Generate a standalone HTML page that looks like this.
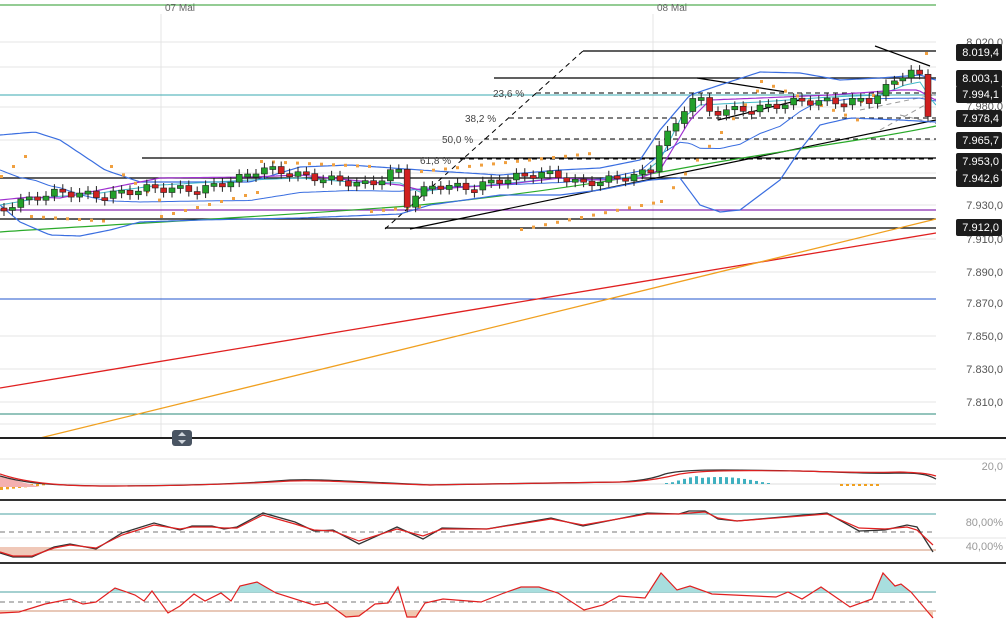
<!DOCTYPE html>
<html><head><meta charset="utf-8"><style>
html,body{margin:0;padding:0;background:#fff;width:1006px;height:626px;overflow:hidden;font-family:"Liberation Sans",sans-serif}
svg{display:block}
text{font-family:"Liberation Sans",sans-serif}
</style></head><body>
<svg id="s" width="1006" height="626" viewBox="0 0 1006 626">
<defs>
<clipPath id="ca"><rect x="0" y="560" width="936" height="32"/></clipPath>
<clipPath id="cb"><rect x="0" y="611" width="936" height="20"/></clipPath>
</defs>
<rect width="1006" height="626" fill="#fff"/>
<g stroke="#e4e4e4" stroke-width="1">
<line x1="0" y1="42" x2="936" y2="42"/><line x1="0" y1="67" x2="936" y2="67"/>
<line x1="0" y1="107" x2="936" y2="107"/><line x1="0" y1="140" x2="936" y2="140"/>
<line x1="0" y1="173" x2="936" y2="173"/><line x1="0" y1="205" x2="936" y2="205"/>
<line x1="0" y1="239" x2="936" y2="239"/><line x1="0" y1="272" x2="936" y2="272"/>
<line x1="0" y1="336" x2="936" y2="336"/><line x1="0" y1="369" x2="936" y2="369"/>
<line x1="0" y1="402" x2="936" y2="402"/><line x1="0" y1="424" x2="936" y2="424"/>
<line x1="161" y1="14" x2="161" y2="438"/><line x1="653" y1="14" x2="653" y2="438"/>
<line x1="0" y1="459" x2="1006" y2="459"/><line x1="0" y1="538" x2="1006" y2="538"/>
</g>
<line x1="0" y1="5" x2="936" y2="5" stroke="#2a9a2a"/>
<text x="165" y="11" font-size="10" fill="#666">07 Mai</text>
<text x="657" y="11" font-size="10" fill="#666">08 Mai</text>
<line x1="0" y1="95" x2="936" y2="95" stroke="#3aa8b0"/>
<line x1="0" y1="299" x2="936" y2="299" stroke="#2255cc"/>
<line x1="0" y1="414" x2="936" y2="414" stroke="#2a8a7a"/>
<line x1="0" y1="210" x2="936" y2="210" stroke="#8a2ab0" stroke-width="1.3"/>
<g stroke="#000" stroke-width="1.2">
<line x1="583" y1="51" x2="956" y2="51"/><line x1="494" y1="78" x2="956" y2="78"/>
<line x1="142" y1="158" x2="956" y2="158"/><line x1="0" y1="178" x2="956" y2="178"/>
<line x1="0" y1="219" x2="956" y2="219"/><line x1="385" y1="228" x2="956" y2="228"/>
<line x1="410" y1="229" x2="936" y2="120"/>
<line x1="875" y1="46" x2="930" y2="66"/><line x1="697" y1="78" x2="786" y2="92"/>
<line x1="718" y1="120" x2="800" y2="100"/>
</g>
<g stroke="#000" stroke-dasharray="5,4" stroke-width="1">
<line x1="385" y1="229" x2="583" y2="51"/>
<line x1="536" y1="93" x2="956" y2="93"/><line x1="509" y1="118" x2="956" y2="118"/>
<line x1="484" y1="139" x2="956" y2="139"/><line x1="460" y1="159" x2="956" y2="159"/>
</g>
<g stroke="#999" stroke-dasharray="5,4"><line x1="880" y1="130" x2="1006" y2="60"/><line x1="860" y1="110" x2="1006" y2="80"/><line x1="900" y1="115" x2="1006" y2="140"/></g>
<g font-size="10" fill="#444">
<text x="493" y="97">23,6 %</text><text x="465" y="122">38,2 %</text>
<text x="442" y="143">50,0 %</text><text x="420" y="164">61,8 %</text>
</g>
<line x1="0" y1="388" x2="936" y2="233" stroke="#e02020" stroke-width="1.3"/>
<line x1="40" y1="438" x2="936" y2="219" stroke="#f0a020" stroke-width="1.3"/>
<path d="M0,232 C100,225 300,215 420,205 C520,195 620,180 700,165 C800,148 880,138 936,126" fill="none" stroke="#2aaa2a" stroke-width="1.2"/>
<g id="ind"></g>
<g id="cndl"></g>
<rect x="936" y="14" width="70" height="424" fill="#fff"/>
<line x1="0" y1="484" x2="936" y2="484" stroke="#ddd"/>
<g id="hist"></g>
<path d="M0,476 L40,487 L0,487Z" fill="#f4b0b0"/>
<path d="M0,476 C20,482 40,485 100,486 C180,486 240,484 290,480 C320,479 340,481 430,485 C480,484 520,483 620,482 C640,481 655,478 665,474 C680,470 700,469 800,471 C840,472 870,474 900,473 C925,473 930,476 936,479" fill="none" stroke="#333" stroke-width="1.3"/>
<path d="M0,474 C20,481 50,486 100,486 C180,486 240,484 290,481 C320,480 340,482 430,485 C480,484 520,483 620,482 C640,482 660,479 680,474 C700,471 720,470 800,471 C840,472 870,473 900,472 C925,473 930,474 936,476" fill="none" stroke="#e02020" stroke-width="1.2"/>
<line x1="0" y1="514" x2="936" y2="514" stroke="#4aa0a0"/>
<line x1="0" y1="532" x2="936" y2="532" stroke="#777" stroke-dasharray="5,4"/>
<line x1="0" y1="550" x2="936" y2="550" stroke="#d09070"/>
<path d="M0,550 L0,553 L13,557 L32,557 L54,547 L0,547Z" fill="#f0c8b8"/>
<path d="M0,553 L13,557 L32,557 L54,547 L70,544 L96,549 L122,533 L154,523 L180,530 L192,526 L212,526 L224,529 L237,527 L263,513 L295,522 L314,531 L333,530 L359,544 L397,527 L423,539 L442,528 L487,529 L551,518 L583,526 L647,513 L679,514 L689,511 L705,511 L718,519 L737,521 L827,513 L859,531 L885,530 L907,525 L917,527 L933,552" fill="none" stroke="#333" stroke-width="1.3"/>
<path d="M0,552 L13,556 L32,556 L54,548 L70,545 L96,548 L122,535 L154,525 L180,529 L192,527 L212,527 L224,528 L237,528 L263,515 L295,524 L314,530 L333,531 L359,541 L397,529 L423,536 L442,529 L487,529 L551,519 L583,525 L647,514 L679,514 L689,513 L705,512 L718,518 L737,521 L827,514 L859,528 L885,529 L907,527 L917,530 L933,545" fill="none" stroke="#e02020" stroke-width="1.2"/>
<line x1="0" y1="592" x2="936" y2="592" stroke="#4aa0a0"/>
<line x1="0" y1="602" x2="936" y2="602" stroke="#777" stroke-dasharray="5,4"/>
<line x1="0" y1="611" x2="936" y2="611" stroke="#d09070"/>
<g id="bt"></g>
<line x1="0" y1="438" x2="1006" y2="438" stroke="#222" stroke-width="2"/>
<line x1="0" y1="500" x2="1006" y2="500" stroke="#333" stroke-width="2"/>
<line x1="0" y1="563" x2="1006" y2="563" stroke="#333" stroke-width="2"/>
<rect x="172" y="430" width="20" height="16" rx="3" fill="#4a5563"/>
<path d="M178,436 l4,-4 l4,4z M178,440 l4,4 l4,-4z" fill="#cfd5dc"/>
<g font-size="11" fill="#555" text-anchor="end">
<text x="1003" y="46">8.020,0</text><text x="1003" y="110">7.980,0</text>
<text x="1003" y="209">7.930,0</text><text x="1003" y="243">7.910,0</text>
<text x="1003" y="276">7.890,0</text><text x="1003" y="307">7.870,0</text>
<text x="1003" y="340">7.850,0</text><text x="1003" y="373">7.830,0</text>
<text x="1003" y="406">7.810,0</text>
</g>
<g font-size="11" fill="#999" text-anchor="end">
<text x="1003" y="470">20,0</text>
<text x="1003" y="526">80,00%</text><text x="1003" y="550">40,00%</text>
</g>
<g id="lbl" font-size="11" fill="#fff"></g>
</svg>
<script>
(function(){
var s=document.getElementById('s'),NS='http://www.w3.org/2000/svg';
function el(p,t,a){var e=document.createElementNS(NS,t);for(var k in a)e.setAttribute(k,a[k]);p.appendChild(e);return e;}
function mk(kp){return function(x){for(var i=1;i<kp.length;i++)if(x<=kp[i][0]){var a=kp[i-1],b=kp[i],t=(x-a[0])/(b[0]-a[0]);return a[1]+t*(b[1]-a[1]);}return kp[kp.length-1][1];};}
function pth(f){var d='';for(var x=0;x<=936;x+=4){d+=(x?'L':'M')+x+','+f(x).toFixed(1);}return d;}
var py=mk([[0,208],[40,196],[60,192],[100,196],[150,188],[200,190],[240,178],[260,168],[300,175],[340,181],[370,185],[398,168],[406,205],[415,195],[435,185],[470,188],[500,180],[540,173],[560,176],[580,184],[620,178],[650,172],[660,140],[675,128],[690,96],[700,100],[710,112],[760,108],[800,101],[840,102],[870,100],[884,90],[905,72],[918,70],[924,100],[935,140]]);
var up=mk([[0,135],[35,132],[60,140],[105,170],[140,182],[250,182],[300,167],[350,165],[420,170],[500,175],[560,170],[600,168],[640,160],[660,130],[690,95],[720,85],[760,72],[800,73],[840,80],[880,78],[920,75],[935,80]]);
var lo=mk([[0,205],[20,222],[50,235],[80,236],[110,230],[140,222],[200,220],[300,218],[400,214],[430,205],[500,195],[560,195],[600,190],[650,180],[680,178],[700,205],[720,212],[740,210],[780,180],[800,150],[820,125],[850,118],[900,120],[935,122]]);
var pu=mk([[0,200],[30,197],[60,198],[100,190],[160,178],[250,177],[300,175],[350,180],[400,185],[420,190],[450,188],[500,185],[560,178],[600,180],[640,178],[660,170],[690,120],[710,100],[760,98],[830,95],[900,90],[918,90],[935,100]]);
var cy=mk([[0,205],[40,198],[100,193],[160,185],[250,180],[300,178],[350,182],[400,183],[420,192],[450,188],[500,184],[560,178],[600,180],[640,176],[660,160],[680,120],[700,105],[760,102],[830,97],[880,95],[905,85],[920,82],[935,105]]);
var ind=document.getElementById('ind');
el(ind,'path',{d:pth(up),fill:'none',stroke:'#3a6ee0','stroke-width':1.2});
el(ind,'path',{d:pth(lo),fill:'none',stroke:'#3a6ee0','stroke-width':1.2});
el(ind,'path',{d:pth(function(x){return (up(x)+lo(x))/2;}),fill:'none',stroke:'#3a6ee0','stroke-width':1});
el(ind,'path',{d:pth(cy),fill:'none',stroke:'#40b8c8','stroke-width':1});
el(ind,'path',{d:pth(pu),fill:'none',stroke:'#a030d0','stroke-width':1.2});
var segs=[[0,30,-1,175,150],[30,110,1,215,220],[110,160,-1,165,200],[160,260,1,215,190],[260,370,-1,160,165],[370,420,1,210,205],[420,590,-1,170,152],[520,660,1,228,200],[660,760,1,200,85],[760,860,-1,80,120],[860,900,1,100,80],[925,936,-1,52,52]];
segs.forEach(function(sg){for(var x=sg[0];x<sg[1];x+=12){var t=(x-sg[0])/(sg[1]-sg[0]);el(ind,'rect',{x:x,y:(sg[3]+t*(sg[4]-sg[3])).toFixed(1),width:3,height:3,fill:'#f0a040'});}});
var g=document.getElementById('cndl');var prev=py(0);
for(var x=4;x<936;x+=8.4){var c=py(x)+Math.sin(x*1.7)*4;var o=prev;var tp=Math.min(o,c),h=Math.max(Math.abs(o-c),3);
el(g,'line',{x1:x,y1:tp-5,x2:x,y2:tp+h+5,stroke:'#222','stroke-width':1});
el(g,'rect',{x:x-3,y:tp,width:6,height:h,fill:c<o?'#22a02a':'#d02020',stroke:'#222','stroke-width':0.6});
prev=c;}
var hg=document.getElementById('hist');
for(var x=665;x<770;x+=6){var hh=Math.max(1,10*Math.sin((x-665)/105*Math.PI)*(x<700?1:0.7));el(hg,'rect',{x:x,y:484-hh,width:3,height:hh,fill:'#40b0c0'});}
for(var x=0;x<45;x+=6)el(hg,'rect',{x:x,y:484,width:3,height:6-x/9,fill:'#f0a020'});
for(var x=840;x<880;x+=6)el(hg,'rect',{x:x,y:484,width:3,height:2,fill:'#f0a020'});
var bp='M0,613 L19,612 L45,604 L70,599 L83,604 L96,602 L115,588 L135,595 L144,601 L152,591 L168,613 L180,606 L194,594 L205,601 L221,593 L231,601 L240,586 L257,582 L276,593 L314,605 L327,603 L346,617 L359,616 L375,604 L388,603 L398,587 L407,617 L416,617 L425,603 L443,599 L481,602 L504,593 L521,587 L539,587 L558,593 L584,610 L603,605 L619,596 L645,598 L661,573 L677,590 L690,586 L712,594 L776,597 L788,592 L802,599 L821,587 L850,607 L872,599 L883,573 L895,586 L901,584 L911,592 L933,618';
var bt=document.getElementById('bt');
el(bt,'path',{d:bp+' L933,592 L0,592Z',fill:'#a8dede','clip-path':'url(#ca)'});
el(bt,'path',{d:bp+' L933,611 L0,611Z',fill:'#f0c8b0','clip-path':'url(#cb)'});
el(bt,'path',{d:bp,fill:'none',stroke:'#e02020','stroke-width':1.2});
var L=document.getElementById('lbl');
[['8.019,4',52],['8.003,1',78],['7.994,1',94],['7.978,4',118],['7.965,7',140],['7.953,0',161],['7.942,6',178],['7.912,0',227]].forEach(function(a){
el(L,'rect',{x:956,y:a[1]-8,width:46,height:17,rx:2,fill:'#1c1c1c'});var t=el(L,'text',{x:999,y:a[1]+4,'text-anchor':'end'});t.textContent=a[0];});
})();
</script>
</body></html>
